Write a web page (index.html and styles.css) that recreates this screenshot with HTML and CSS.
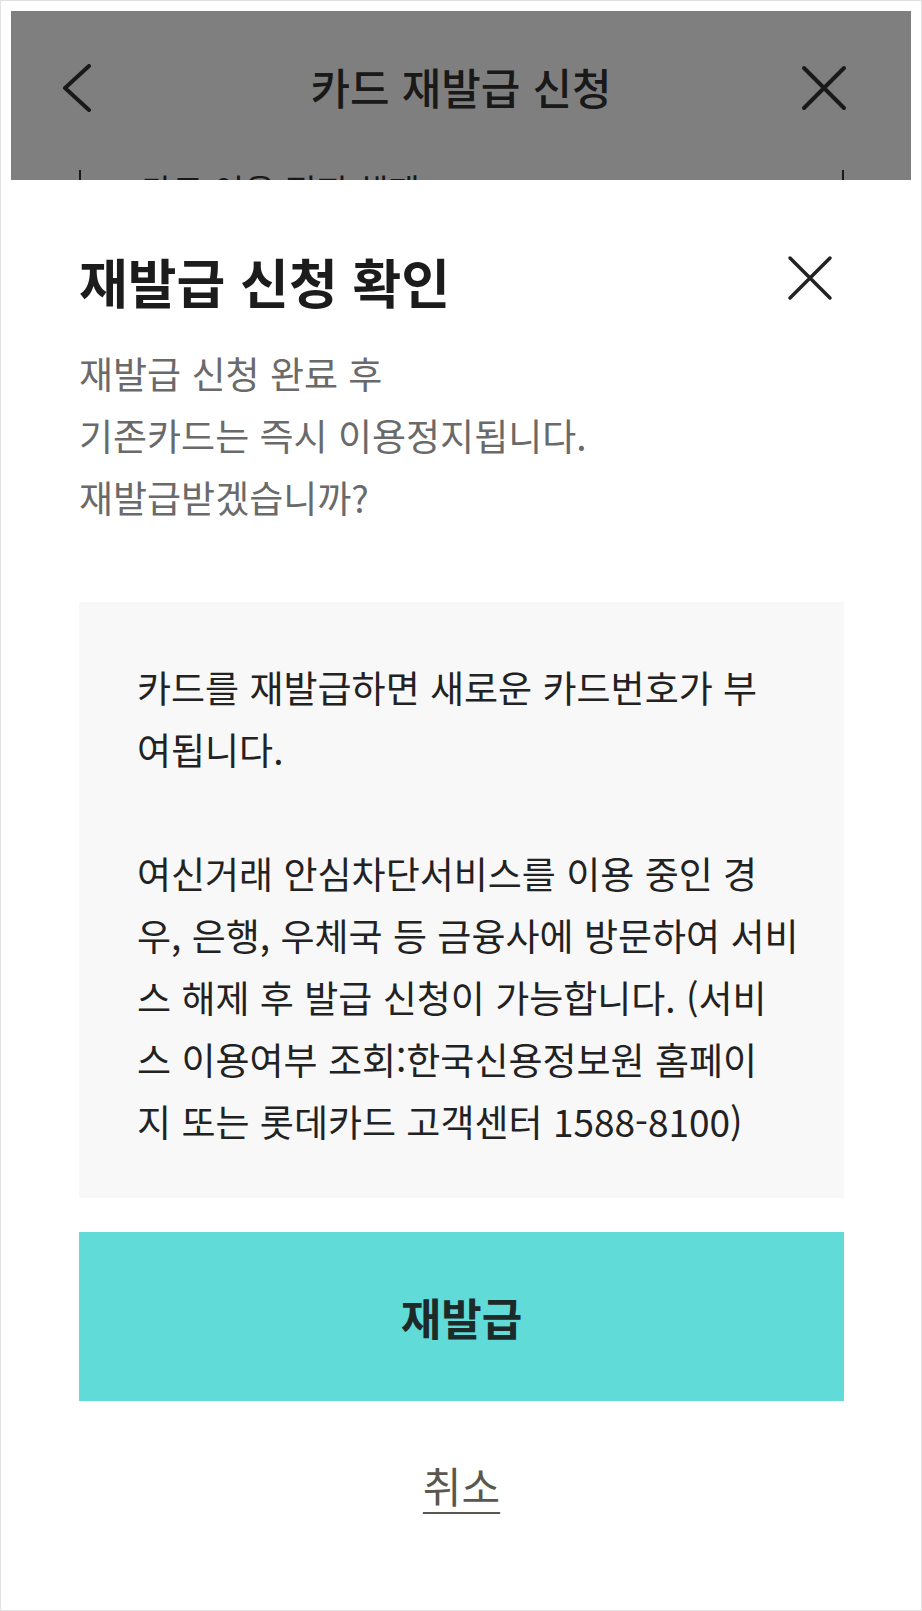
FILE: index.html
```html
<!DOCTYPE html>
<html lang="ko">
<head>
  <meta charset="UTF-8">
  <meta name="viewport" content="width=device-width, initial-scale=1.0">
  <title>카드 재발급 신청</title>
  <link rel="stylesheet" href="styles.css">
</head>
<body>
  <div class="frame">
    <div class="screen">
      <div class="page">
        <header class="appbar">
          <button class="icon-btn back" aria-label="뒤로">
            <svg width="48" height="48" viewBox="0 0 48 48"><path d="M34 2 L10 24 L34 46" /></svg>
          </button>
          <h1 class="appbar-title">카드 재발급 신청</h1>
          <button class="icon-btn close" aria-label="닫기">
            <svg width="48" height="48" viewBox="0 0 48 48"><path d="M4 4 L44 44 M44 4 L4 44" /></svg>
          </button>
        </header>
        <div class="page-box">
          <p>카드 이용 정지 해제</p>
        </div>
      </div>

      <div class="dim"></div>

      <div class="sheet" role="dialog">
        <div class="sheet-head">
          <h2 class="sheet-title">재발급 신청 확인</h2>
          <button class="sheet-close" aria-label="닫기">
            <svg width="48" height="48" viewBox="0 0 48 48"><path d="M4 4 L44 44 M44 4 L4 44" /></svg>
          </button>
        </div>
        <p class="sheet-desc">재발급 신청 완료 후<br>기존카드는 즉시 이용정지됩니다.<br>재발급받겠습니까?</p>

        <div class="notice">
          <p>카드를 재발급하면 새로운 카드번호가 부<br>여됩니다.</p>
          <p>여신거래 안심차단서비스를 이용 중인 경<br>우, 은행, 우체국 등 금융사에 방문하여 서비<br>스 해제 후 발급 신청이 가능합니다. (서비<br>스 이용여부 조회:한국신용정보원 홈페이<br>지 또는 롯데카드 고객센터 1588-8100)</p>
        </div>

        <button class="btn-primary">재발급</button>
        <div class="cancel-wrap">
          <a href="#" class="btn-cancel">취소</a>
        </div>
      </div>
    </div>
  </div>
</body>
</html>
```

FILE: styles.css
```css
* {
  box-sizing: border-box;
}

body {
  margin: 0;
  background: #ffffff;
  font-family: "Noto Sans CJK KR", "Noto Sans", sans-serif;
  color: #222222;
}

.frame {
  width: 922px;
  height: 1611px;
  border: 1px solid #e2e2e2;
  padding: 10px;
}

.screen {
  position: relative;
  width: 100%;
  height: 100%;
  overflow: hidden;
  background: #ffffff;
}

/* page underneath the dialog */
.page {
  height: 100%;
}

.appbar {
  height: 157px;
  display: grid;
  grid-template-columns: 1fr auto 1fr;
  align-items: center;
  padding: 0 44px 7px;
  background: #ffffff;
}

.icon-btn {
  border: none;
  background: none;
  padding: 0;
  width: 48px;
  height: 48px;
  margin-top: 4px;
}

.icon-btn svg path {
  fill: none;
  stroke: #333333;
  stroke-width: 4;
  stroke-linecap: round;
  stroke-linejoin: round;
}

.icon-btn.back {
  justify-self: start;
}

.icon-btn.close {
  justify-self: end;
  margin-right: 19px;
}

.appbar-title {
  margin: 0;
  font-size: 43px;
  font-weight: 500;
  color: #333333;
}

.page-box {
  margin: 0 67px 0 68px;
  border-left: 2px solid #333333;
  border-right: 2px solid #333333;
  padding: 0 60px;
  height: 200px;
}

.page-box p {
  margin: 2px 0 0;
  font-size: 34px;
  line-height: 40px;
  color: #333333;
}

.dim {
  position: absolute;
  inset: 0;
  background: rgba(0, 0, 0, 0.5);
}

/* bottom sheet */
.sheet {
  position: absolute;
  top: 169px;
  left: 0;
  right: 0;
  bottom: 0;
  background: #ffffff;
  padding: 70px 67px 0 68px;
}

.sheet-head {
  display: flex;
  justify-content: space-between;
  align-items: center;
}

.sheet-title {
  margin: 0;
  font-size: 53px;
  line-height: 62px;
  font-weight: 700;
  color: #1c1c1c;
}

.sheet-close {
  border: none;
  background: none;
  padding: 0;
  width: 48px;
  height: 48px;
  margin-right: 10px;
  margin-top: -6px;
}

.sheet-close svg path {
  fill: none;
  stroke: #222222;
  stroke-width: 3.5;
  stroke-linecap: round;
}

.sheet-desc {
  margin: 30px 0 0;
  font-size: 37px;
  line-height: 62px;
  color: #6a6a6a;
}

.notice {
  margin-top: 74px;
  background: #f8f8f8;
  padding: 54px 30px 46px 58px;
}

.notice p {
  margin: 0;
  font-size: 37px;
  line-height: 62px;
  color: #222222;
  white-space: nowrap;
}

.notice p + p {
  margin-top: 62px;
}

.btn-primary {
  display: block;
  width: 100%;
  height: 169px;
  margin-top: 34px;
  border: none;
  background: #60dbd8;
  font-family: inherit;
  font-size: 44px;
  font-weight: 700;
  color: #1c2a2a;
}

.cancel-wrap {
  text-align: center;
  margin-top: 57px;
}

.btn-cancel {
  font-size: 42px;
  line-height: 54px;
  color: #5c574e;
  text-decoration: underline;
  text-decoration-thickness: 2px;
  text-underline-offset: 9px;
}
```
